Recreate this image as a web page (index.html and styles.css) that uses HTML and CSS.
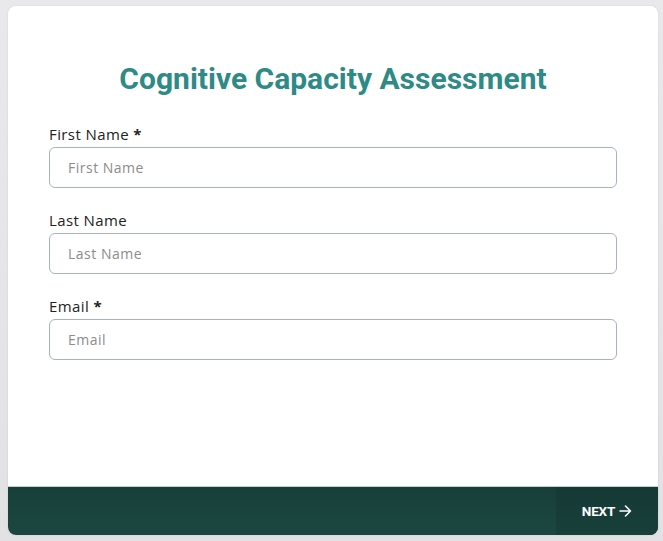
FILE: index.html
```html
<!DOCTYPE html>
<html lang="en">
<head>
<meta charset="utf-8">
<title>Cognitive Capacity Assessment</title>
<link rel="stylesheet" href="styles.css">
</head>
<body>
<div class="card">
  <div class="content">
    <h1 class="title">Cognitive Capacity Assessment</h1>
    <form class="form">
      <div class="field">
        <label class="label" for="first">First Name <span class="req">*</span></label>
        <input class="input" id="first" type="text" placeholder="First Name">
      </div>
      <div class="field">
        <label class="label" for="last">Last Name</label>
        <input class="input" id="last" type="text" placeholder="Last Name">
      </div>
      <div class="field">
        <label class="label" for="email">Email <span class="req">*</span></label>
        <input class="input" id="email" type="email" placeholder="Email">
      </div>
    </form>
  </div>
  <div class="footer">
    <button class="next" type="button">NEXT <svg class="arrow" width="13" height="12" viewBox="0 0 13 12"><path d="M1 6h10.5M6.5 1l5 5-5 5" fill="none" stroke="#fff" stroke-width="1.5" stroke-linecap="round" stroke-linejoin="round"/></svg></button>
  </div>
</div>
</body>
</html>
```
FILE: styles.css
```css
* { box-sizing: border-box; }
html, body { height: 100%; }
body {
  margin: 0;
  padding: 6px 5px 6px 8px;
  background: linear-gradient(180deg, #e9e9eb 0%, #e2e2e4 100%);
  font-family: "Open Sans", "Noto Sans", sans-serif;
}
.card {
  height: 529px;
  background: #fff;
  border-radius: 8px;
  overflow: hidden;
  display: flex;
  flex-direction: column;
  box-shadow: 0 0 3px rgba(0,0,0,0.08);
}
.content {
  flex: 1;
  padding: 56px 41px 0 41px;
}
.title {
  margin: 0 0 27px 0;
  text-align: center;
  font-family: Roboto, "Liberation Sans", sans-serif;
  font-weight: 700;
  font-size: 30px;
  line-height: 34px;
  color: #2e8a86;
  letter-spacing: 0;
}
.form { display: flex; flex-direction: column; gap: 21px; }
.field { display: flex; flex-direction: column; gap: 4px; }
.label {
  font-size: 15px;
  line-height: 20px;
  color: #222;
  font-weight: 500;
  letter-spacing: 0.4px;
  padding-top: 1px;
  margin-bottom: -1px;
}
.req { font-weight: 700; }
.input {
  height: 41px;
  width: 100%;
  border: 1px solid #a9b1c4;
  border-radius: 6px;
  padding: 0 18px;
  font-family: "Open Sans", "Noto Sans", sans-serif;
  font-size: 14px;
  letter-spacing: 0.5px;
  color: #333;
  outline: none;
}
.input::placeholder { color: #8c8c8c; }
.footer {
  height: 49px;
  border-top: 1px solid #c9cccc;
  background: linear-gradient(180deg, #173f39 0%, #1c4741 100%);
  display: flex;
  justify-content: flex-end;
}
.next {
  width: 102px;
  border: none;
  background: linear-gradient(180deg, #153a35 0%, #193f3a 100%);
  color: #fff;
  font-family: Roboto, "Liberation Sans", sans-serif;
  font-weight: 700;
  font-size: 13.5px;
  letter-spacing: -0.2px;
  display: flex;
  align-items: center;
  justify-content: center;
  gap: 4px;
  padding: 0;
  cursor: pointer;
}
.arrow { display: block; }
```
